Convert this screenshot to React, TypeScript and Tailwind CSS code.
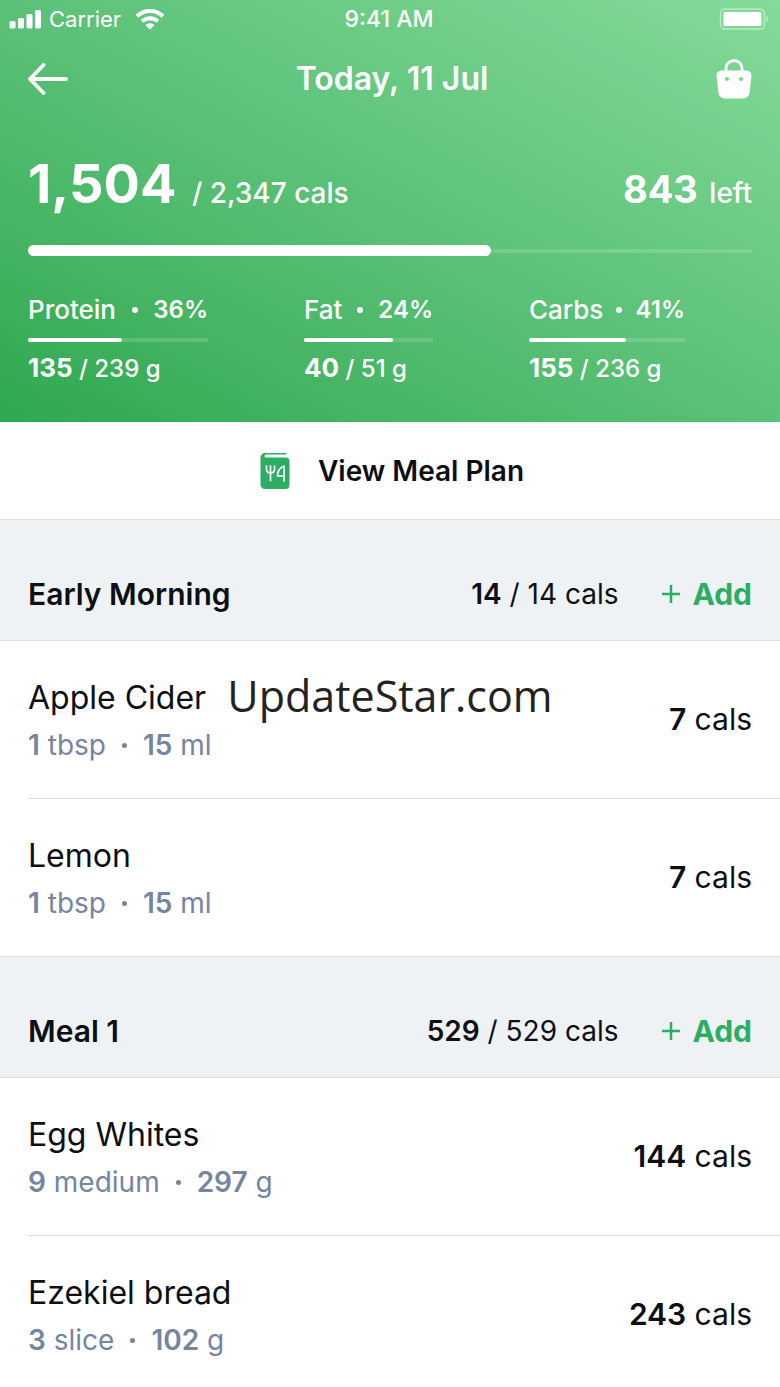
type Macro = { name: string; percent: number; eaten: number; goal: number; fill: number; width: string }
type Food = { name: string; amount: number; unit: string; weight: number; weightUnit: string; cals: number }
type Meal = { name: string; eaten: number; goal: number; foods: Food[] }

const macros: Macro[] = [
  { name: 'Protein', percent: 36, eaten: 135, goal: 239, fill: 52, width: 'w-[180px]' },
  { name: 'Fat', percent: 24, eaten: 40, goal: 51, fill: 69, width: 'w-[129px]' },
  { name: 'Carbs', percent: 41, eaten: 155, goal: 236, fill: 62, width: 'w-[156px]' },
]

const meals: Meal[] = [
  {
    name: 'Early Morning',
    eaten: 14,
    goal: 14,
    foods: [
      { name: 'Apple Cider', amount: 1, unit: 'tbsp', weight: 15, weightUnit: 'ml', cals: 7 },
      { name: 'Lemon', amount: 1, unit: 'tbsp', weight: 15, weightUnit: 'ml', cals: 7 },
    ],
  },
  {
    name: 'Meal 1',
    eaten: 529,
    goal: 529,
    foods: [
      { name: 'Egg Whites', amount: 9, unit: 'medium', weight: 297, weightUnit: 'g', cals: 144 },
      { name: 'Ezekiel bread', amount: 3, unit: 'slice', weight: 102, weightUnit: 'g', cals: 243 },
    ],
  },
]

function StatusBar() {
  return (
    <div className="grid h-[38px] grid-cols-3 items-center pl-[9px] pr-[11px] text-[22px]">
      <div className="flex items-center gap-2">
        <svg className="h-5 w-8" viewBox="0 0 32 20" fill="currentColor" aria-hidden="true">
          <rect x="0.5" y="12" width="6" height="7.5" rx="1.5" />
          <rect x="9" y="9" width="6" height="10.5" rx="1.5" />
          <rect x="17.5" y="5" width="6" height="14.5" rx="1.5" />
          <rect x="26" y="1" width="6" height="18.5" rx="1.5" />
        </svg>
        <span>Carrier</span>
        <svg className="ml-1 h-[22px] w-[34px]" viewBox="-2 0 34 22" aria-hidden="true">
          <g fill="none" stroke="currentColor" strokeWidth="4">
            <path d="M2 8.2a18.6 18.6 0 0 1 26 0" />
            <path d="M7 13.400a11.5 11.5 0 0 1 16 0" />
          </g>
          <path d="M10.4 17a6.600 6.600 0 0 1 9.200 0L15 21.600z" fill="currentColor" />
        </svg>
      </div>
      <span className="text-center text-[23px] font-medium">9:41 AM</span>
      <svg className="h-[22px] w-[50px] justify-self-end" viewBox="0 0 50 22" aria-hidden="true">
        <rect x="1.500" y="1" width="44" height="20" rx="4.500" fill="none" stroke="white" strokeOpacity="0.45" strokeWidth="1.500" />
        <rect x="4.500" y="4" width="38" height="14" rx="1.500" fill="white" />
        <path d="M47.500 7.500c2 1.500 2 5.500 0 7z" fill="white" fillOpacity="0.5" />
      </svg>
    </div>
  )
}

function MacroStat({ macro }: { macro: Macro }) {
  return (
    <div className={macro.width}>
      <div className="flex items-center justify-between text-2xl leading-8">
        <span className="text-[26px] font-medium">{macro.name}</span>
        <span className="size-1.5 rounded-full bg-white" />
        <span className="font-semibold">{macro.percent}%</span>
      </div>
      <div className="mt-3 h-1 bg-white/15">
        <div className="h-1 rounded-full bg-white" style={{ width: `${macro.fill}%` }} />
      </div>
      <p className="mt-2 text-2xl leading-9 font-medium whitespace-nowrap">
        <b className="text-[26px] font-bold">{macro.eaten}</b> / {macro.goal} g
      </p>
    </div>
  )
}

function Header() {
  return (
    <header className="bg-linear-to-tr from-[#2da84f] via-[#5bc178] to-[#84db99] text-white">
      <StatusBar />
      <div className="flex h-[82px] items-center justify-between px-7">
        <button type="button" aria-label="Back">
          <svg className="h-8 w-10" viewBox="0 0 40 32" fill="none" stroke="currentColor" strokeWidth="3.8" strokeLinecap="round" strokeLinejoin="round">
            <path d="M38 16H2M15.500 2L2 16l13.500 14" />
          </svg>
        </button>
        <h1 className="text-[32px] font-semibold">Today, 11 Jul</h1>
        <button type="button" aria-label="Groceries">
          <svg className="h-10 w-9" viewBox="0 0 36 40">
            <path d="M10 13V9.500a8 8 0 0 1 16 0V13" fill="none" stroke="currentColor" strokeWidth="2.800" />
            <path
              fill="currentColor"
              fillRule="evenodd"
              d="M6 11.500h24c3.500 0 5.800 2.500 5.400 6l-1.700 15.500c-.5 4.300-3 6.500-7 6.500H9.300c-4 0-6.500-2.200-7-6.500L.6 17.500c-.4-3.500 1.900-6 5.400-6zM11 18a2 2 0 1 0 0 4 2 2 0 0 0 0-4zm14 0a2 2 0 1 0 0 4 2 2 0 0 0 0-4z"
            />
          </svg>
        </button>
      </div>

      <div className="px-7 pt-8 pb-[35px]">
        <div className="flex items-baseline justify-between leading-16">
          <p className="text-[28px] font-medium">
            <b className="mr-2 text-[54px] font-bold">1,504</b> / 2,347 cals
          </p>
          <p className="text-[28px] font-medium">
            <b className="mr-1 text-[38px] font-bold">843</b> left
          </p>
        </div>
        <div className="mt-5 flex h-[11px] items-center">
          <div className="h-[11px] w-[64%] rounded-full bg-white" />
          <div className="h-1 flex-1 rounded-r-full bg-white/15" />
        </div>
        <div className="mt-[38px] flex gap-24">
          {macros.map((macro) => (
            <MacroStat key={macro.name} macro={macro} />
          ))}
        </div>
      </div>
    </header>
  )
}

function FoodRow({ food }: { food: Food }) {
  return (
    <li className="ml-7 flex items-center justify-between border-b border-[#dcdfe1] pt-[37px] pr-7 pb-[38px] last:border-b-0">
      <div>
        <h3 className="text-[32px] leading-10">{food.name}</h3>
        <p className="mt-3 flex items-center text-[28px] leading-[30px] text-[#76859f]">
          <span>
            <b className="font-semibold">{food.amount}</b> {food.unit}
          </span>
          <span className="mx-4 size-[5px] rounded-full bg-[#76859f]" />
          <span>
            <b className="font-semibold">{food.weight}</b> {food.weightUnit}
          </span>
        </p>
      </div>
      <p className="text-[30px]">
        <b className="font-semibold">{food.cals}</b> cals
      </p>
    </li>
  )
}

function MealSection({ meal }: { meal: Meal }) {
  return (
    <section>
      <div className="flex items-center border-y border-[#dcdfe1] bg-[#eef2f5] px-7 pt-[54px] pb-[26px] leading-10">
        <h2 className="flex-1 text-[30px] font-semibold">{meal.name}</h2>
        <p className="text-[28px]">
          <b className="font-semibold">{meal.eaten}</b> / {meal.goal} cals
        </p>
        <button type="button" className="ml-11 flex items-center gap-3 text-[30px] font-bold text-[#2bae63]">
          <svg className="size-[18px]" viewBox="0 0 18 18" stroke="currentColor" strokeWidth="2.500" aria-hidden="true">
            <path d="M9 0v18M0 9h18" />
          </svg>
          Add
        </button>
      </div>
      <ul>
        {meal.foods.map((food) => (
          <FoodRow key={food.name} food={food} />
        ))}
      </ul>
    </section>
  )
}

export default function App() {
  return (
    <main className="relative h-screen overflow-hidden bg-white font-['Inter',sans-serif] text-[#0d0f12]">
      <Header />
      <button type="button" className="flex h-[97px] w-full items-center justify-center gap-7 pl-1 text-[28px] font-semibold">
        <svg className="h-9 w-[30px]" viewBox="0 0 30 36" aria-hidden="true">
          <path d="M5 0h21v1.500H6a1.500 1.500 0 0 0 0 3h20a3.500 3.500 0 0 1 3.500 3.500v24a4 4 0 0 1-4 4H5a4.500 4.500 0 0 1-4.500-4.500v-27A4.500 4.500 0 0 1 5 0z" fill="#2bae63" />
          <g fill="none" stroke="white" strokeWidth="1.700" strokeLinecap="round" strokeLinejoin="round">
            <path d="M6.500 13v3c0 3 1.500 4 4 4s4-1 4-4v-3M10.500 13v14.500" />
            <path d="M24 28V13c-4 1.500-6.500 5-6.500 10H24" />
          </g>
        </svg>
        View Meal Plan
      </button>
      {meals.map((meal) => (
        <MealSection key={meal.name} meal={meal} />
      ))}
      <div className="pointer-events-none absolute inset-x-0 top-[666px] text-center font-['Open_Sans',sans-serif] text-[43px] leading-[60px] text-[#222]">
        UpdateStar.com
      </div>
    </main>
  )
}
